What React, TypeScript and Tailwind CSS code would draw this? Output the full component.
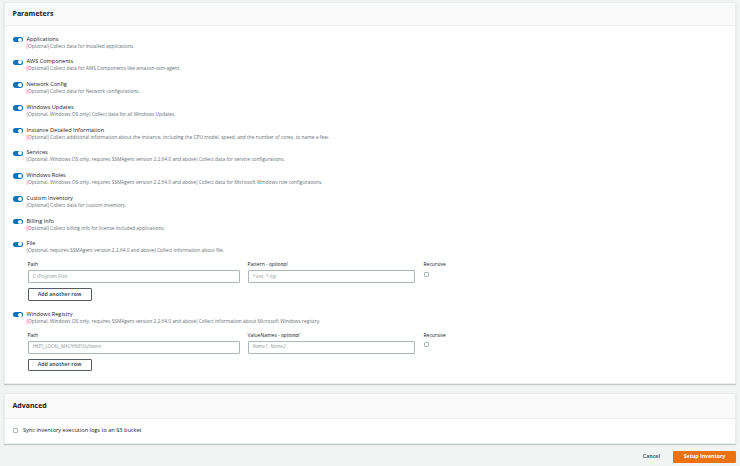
import React from "react";

type Item = { title: string; desc: string };

const items: Item[] = [
  { title: "Applications", desc: "(Optional) Collect data for installed applications." },
  { title: "AWS Components", desc: "(Optional) Collect data for AWS Components like amazon-ssm-agent." },
  { title: "Network Config", desc: "(Optional) Collect data for Network configurations." },
  { title: "Windows Updates", desc: "(Optional, Windows OS only) Collect data for all Windows Updates." },
  {
    title: "Instance Detailed Information",
    desc: "(Optional) Collect additional information about the instance, including the CPU model, speed, and the number of cores, to name a few.",
  },
  {
    title: "Services",
    desc: "(Optional, Windows OS only, requires SSMAgent version 2.2.64.0 and above) Collect data for service configurations.",
  },
  {
    title: "Windows Roles",
    desc: "(Optional, Windows OS only, requires SSMAgent version 2.2.64.0 and above) Collect data for Microsoft Windows role configurations.",
  },
  { title: "Custom Inventory", desc: "(Optional) Collect data for custom inventory." },
  { title: "Billing Info", desc: "(Optional) Collect billing info for license included applications." },
];

function Toggle() {
  return (
    <div className="mt-[1.25px] w-[10px] h-[5.5px] shrink-0 rounded-full bg-[#0073bb] flex items-center justify-end px-[0.8px]">
      <div className="w-[4px] h-[4px] rounded-full bg-white" />
    </div>
  );
}

function Row({ title, desc, children }: { title: string; desc: string; children?: React.ReactNode }) {
  return (
    <div className="flex items-start gap-[4px]">
      <Toggle />
      <div className="flex flex-col flex-1">
        <div className="text-[5.6px] leading-[7px] text-[#16191f]">{title}</div>
        <div className="text-[4.85px] leading-[6px] text-[#687078] whitespace-nowrap">{desc}</div>
        {children}
      </div>
    </div>
  );
}

function SubForm({ second, p1, p2 }: { second: string; p1: string; p2: string }) {
  return (
    <div className="ml-[1px] mt-[8px] flex flex-col">
      <div className="flex gap-[8px]">
        <div className="w-[212px] flex flex-col gap-[3px]">
          <div className="text-[5px] leading-[6px] text-[#16191f]">Path</div>
          <div className="h-[13px] border border-[#aab7b8] rounded-[1px] bg-white flex items-center px-[4px] text-[4.8px] italic text-[#95a0a1]">
            {p1}
          </div>
        </div>
        <div className="w-[167px] flex flex-col gap-[3px]">
          <div className="text-[5px] leading-[6px] text-[#16191f]">
            {second} - <span className="italic">optional</span>
          </div>
          <div className="h-[13px] border border-[#aab7b8] rounded-[1px] bg-white flex items-center px-[4px] text-[4.8px] italic text-[#95a0a1]">
            {p2}
          </div>
        </div>
        <div className="ml-[1px] flex flex-col gap-[4.5px]">
          <div className="text-[5px] leading-[6px] text-[#16191f]">Recursive</div>
          <div className="w-[5px] h-[5px] border border-[#aab7b8] rounded-[1px] bg-white" />
        </div>
      </div>
      <div className="mt-[5px] w-[64px] h-[12.5px] border border-[#545b64] rounded-[1px] bg-white flex items-center justify-center text-[5.2px] font-bold text-[#545b64]">
        Add another row
      </div>
    </div>
  );
}

export default function App() {
  return (
    <div
      className="w-[740px] h-[466px] overflow-hidden bg-[#f2f3f3] pt-[1.5px] pl-[3.5px] pr-[4px] flex flex-col"
      style={{ fontFamily: "'Open Sans', 'Noto Sans', sans-serif" }}
    >
      <div className="bg-white border border-[#eaeded] shadow-[0_1px_1px_rgba(0,28,36,0.2)] flex flex-col">
        <div className="h-[23.5px] bg-[#fafafa] border-b border-[#eaeded] flex items-center px-[8px] text-[7px] font-bold text-[#16191f]">
          Parameters
        </div>
        <div className="px-[8px] pt-[9.5px] pb-[12px] flex flex-col gap-[9.75px]">
          {items.map((it) => (
            <Row key={it.title} title={it.title} desc={it.desc} />
          ))}
          <Row
            title="File"
            desc="(Optional, requires SSMAgent version 2.2.64.0 and above) Collect information about file."
          >
            <SubForm second="Pattern" p1="C:\Program Files" p2="*.exe, *.log" />
          </Row>
          <Row
            title="Windows Registry"
            desc="(Optional, Windows OS only, requires SSMAgent version 2.2.64.0 and above) Collect information about Microsoft Windows registry."
          >
            <SubForm second="ValueNames" p1="HKEY_LOCAL_MACHINE\Software" p2="Name1, Name2" />
          </Row>
        </div>
      </div>

      <div className="mt-[9px] bg-white border border-[#eaeded] shadow-[0_1px_1px_rgba(0,28,36,0.2)] flex flex-col">
        <div className="h-[24.5px] bg-[#fafafa] border-b border-[#eaeded] flex items-center px-[8px] text-[7px] font-bold text-[#16191f]">
          Advanced
        </div>
        <div className="h-[24px] px-[8px] flex items-center gap-[5px]">
          <div className="w-[5.5px] h-[5.5px] border border-[#aab7b8] rounded-[1px] bg-white" />
          <div className="text-[5.6px] text-[#16191f]">Sync inventory execution logs to an S3 bucket</div>
        </div>
      </div>

      <div className="mt-[7.5px] flex justify-end items-center gap-[13px]">
        <div className="text-[5.2px] font-bold text-[#545b64]">Cancel</div>
        <div className="w-[63px] h-[12px] bg-[#ec7211] rounded-[1px] flex items-center justify-center text-[5.2px] font-bold text-white">
          Setup Inventory
        </div>
      </div>
    </div>
  );
}
